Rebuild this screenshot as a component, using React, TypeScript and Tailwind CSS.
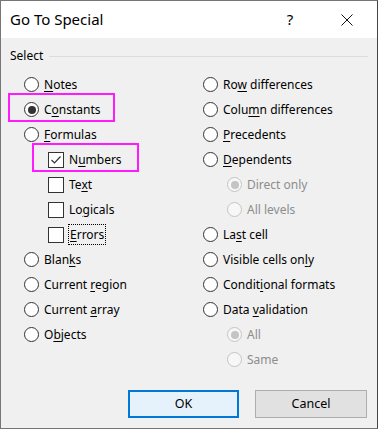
import React from 'react';

type Item = {
  label: string;
  key?: number;
  kind: 'radio' | 'check' | 'sub';
  checked?: boolean;
  disabled?: boolean;
  mark?: boolean;
  focus?: boolean;
};

const leftItems: Item[] = [
  { label: 'Notes', key: 0, kind: 'radio' },
  { label: 'Constants', key: 1, kind: 'radio', checked: true, mark: true },
  { label: 'Formulas', key: 0, kind: 'radio' },
  { label: 'Numbers', key: 1, kind: 'check', checked: true, mark: true },
  { label: 'Text', key: 2, kind: 'check' },
  { label: 'Logicals', key: 2, kind: 'check' },
  { label: 'Errors', key: 0, kind: 'check', focus: true },
  { label: 'Blanks', key: 4, kind: 'radio' },
  { label: 'Current region', key: 8, kind: 'radio' },
  { label: 'Current array', key: 8, kind: 'radio' },
  { label: 'Objects', key: 1, kind: 'radio' },
];

const rightItems: Item[] = [
  { label: 'Row differences', key: 2, kind: 'radio' },
  { label: 'Column differences', key: 4, kind: 'radio' },
  { label: 'Precedents', key: 0, kind: 'radio' },
  { label: 'Dependents', key: 0, kind: 'radio' },
  { label: 'Direct only', kind: 'sub', checked: true, disabled: true },
  { label: 'All levels', kind: 'sub', disabled: true },
  { label: 'Last cell', key: 2, kind: 'radio' },
  { label: 'Visible cells only', key: 16, kind: 'radio' },
  { label: 'Conditional formats', key: 6, kind: 'radio' },
  { label: 'Data validation', key: 5, kind: 'radio' },
  { label: 'All', kind: 'sub', checked: true, disabled: true },
  { label: 'Same', kind: 'sub', disabled: true },
];

function Label({ text, k }: { text: string; k?: number }) {
  if (k === undefined) return <span>{text}</span>;
  return (
    <span>
      {text.slice(0, k)}
      <span className="underline underline-offset-2">{text[k]}</span>
      {text.slice(k + 1)}
    </span>
  );
}

function Radio({ checked, disabled }: { checked?: boolean; disabled?: boolean }) {
  return (
    <span
      className={
        'flex items-center justify-center w-[15px] h-[15px] rounded-full border ' +
        (disabled ? 'border-[#c4c4c4] bg-[#f7f7f7]' : 'border-[#333] bg-white')
      }
    >
      {checked && (
        <span className={'w-[8px] h-[8px] rounded-full ' + (disabled ? 'bg-[#c4c4c4]' : 'bg-[#333]')} />
      )}
    </span>
  );
}

function Check({ checked }: { checked?: boolean }) {
  return (
    <span className="flex items-center justify-center w-[16px] h-[16px] border border-[#333] bg-white">
      {checked && (
        <svg width="14" height="14" viewBox="0 0 14 14">
          <polyline points="2.5,7 5.5,10 11.5,3.5" fill="none" stroke="#333" strokeWidth="1.2" />
        </svg>
      )}
    </span>
  );
}

function Row({ item }: { item: Item }) {
  const isSub = item.kind === 'sub';
  const isCheck = item.kind === 'check';
  return (
    <div className={'relative flex items-center h-[25px] ' + (isSub || isCheck ? 'pl-[24px]' : '')}>
      {item.mark && (
        <span
          className={
            'absolute top-[-4px] h-[29px] w-[107px] border-2 border-[#ff1aff] ' +
            (isCheck ? 'left-[8px]' : 'left-[-16px]')
          }
        />
      )}
      {isCheck ? <Check checked={item.checked} /> : <Radio checked={item.checked} disabled={item.disabled} />}
      <span
        className={
          'ml-[5px] whitespace-nowrap ' +
          (item.disabled ? 'text-[#8d8d8d]' : 'text-black') +
          (item.focus ? ' outline outline-1 outline-dotted outline-black px-[1px] leading-[19px]' : '')
        }
      >
        <Label text={item.label} k={item.key} />
      </span>
    </div>
  );
}

export default function App() {
  return (
    <div className="w-[378px] h-[430px] bg-white" style={{ fontFamily: '"Noto Sans", "Open Sans", sans-serif' }}>
      <div className="flex flex-col h-[429px] border border-[#767676] border-r-[#444]">
        <div className="flex items-center h-[37px] bg-white pl-[9px] text-[15px] text-black">
          <span className="flex-1">Go To Special</span>
          <span className="w-[20px] text-center text-[15px] mr-[41px]">?</span>
          <svg width="12" height="12" viewBox="0 0 12 12" className="mr-[24px]">
            <path d="M0.5 0.5 L11.5 11.5 M11.5 0.5 L0.5 11.5" stroke="#111" strokeWidth="1" />
          </svg>
        </div>

        <div className="flex-1 flex flex-col bg-[#f0f0f0] text-[12px] leading-none">
          <div className="flex items-center h-[16px] mt-[10px] pl-[9px] pr-[9px]">
            <span className="text-black">Select</span>
            <span className="flex-1 h-px bg-[#dcdcdc] ml-[6px]" />
          </div>

          <div className="flex mt-[8px] pl-[23px]">
            <div className="w-[179px] flex flex-col">
              {leftItems.map((it) => (
                <Row key={it.label} item={it} />
              ))}
            </div>
            <div className="flex flex-col">
              {rightItems.map((it, i) => (
                <Row key={it.label + i} item={it} />
              ))}
            </div>
          </div>

          <div className="flex justify-end gap-[16px] mt-[18px] pr-[10px]">
            <button className="w-[111px] h-[28px] border-2 border-[#0078d7] bg-[#e5f1fb] text-black text-[12.5px]">
              OK
            </button>
            <button className="w-[112px] h-[28px] border border-[#adadad] bg-[#e1e1e1] text-black text-[12.5px]">
              Cancel
            </button>
          </div>
        </div>
      </div>
    </div>
  );
}
